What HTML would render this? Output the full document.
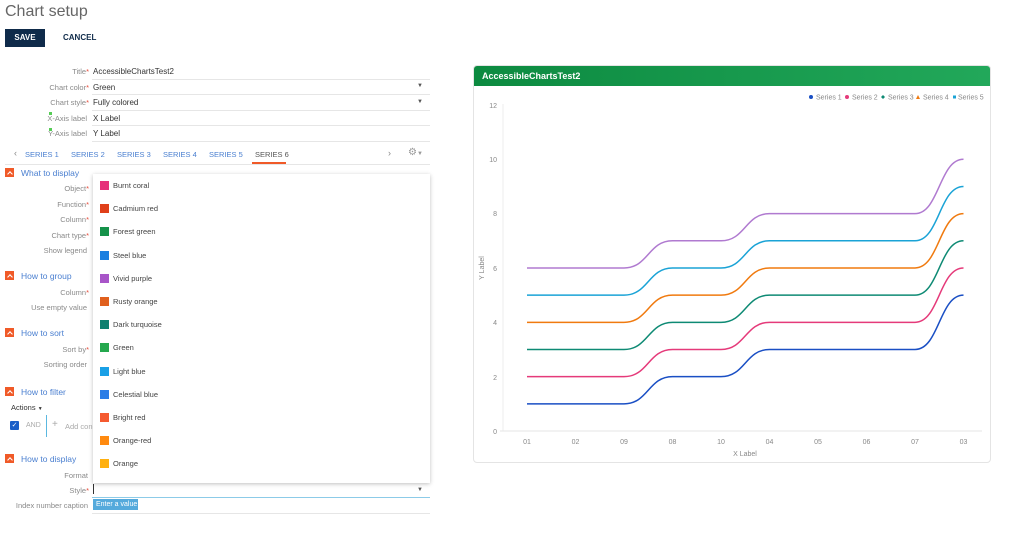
<!DOCTYPE html>
<html><head><meta charset="utf-8"><style>
*{margin:0;padding:0;box-sizing:border-box}
body{width:1024px;height:544px;background:#fff;font-family:"Liberation Sans",sans-serif;position:relative;overflow:hidden;color:#333}
.a{position:absolute;white-space:nowrap}
.lbl{position:absolute;right:935px;font-size:7.5px;color:#8a8a8a;text-align:right;white-space:nowrap}
.req{color:#e74c3c}
.val{position:absolute;left:93px;font-size:8px;color:#333;white-space:nowrap}
.line{position:absolute;left:92px;width:338px;height:1px;background:#e6e6e6}
.tab{position:absolute;top:150px;font-size:7.5px;color:#4a7fd0;white-space:nowrap}
.sec{position:absolute;left:21px;font-size:8.5px;color:#4a7fd0;white-space:nowrap}
.ico{position:absolute;left:5px;width:9px;height:9px;background:#f05a28}
.ico:after{content:"";position:absolute;left:2.5px;top:3.5px;width:3px;height:3px;border-left:1px solid #fff;border-top:1px solid #fff;transform:rotate(45deg)}
.it{position:absolute;left:100px;width:200px;height:10px;font-size:7.5px;color:#444;white-space:nowrap}
.it i{position:absolute;left:0;top:0;width:9px;height:9px}
.it span{position:absolute;left:13px;top:0px;white-space:nowrap}
</style></head><body>
<div class="a" style="left:5px;top:3px;font-size:16px;color:#666">Chart setup</div>
<div class="a" style="left:5px;top:29px;width:40px;height:18px;background:#0f2b4a;color:#fff;font-size:8px;font-weight:bold;line-height:18px;text-align:center">SAVE</div>
<div class="a" style="left:63px;top:33px;font-size:8px;font-weight:bold;color:#0f2b4a">CANCEL</div>

<div class="lbl" style="top:67px">Title<span class="req">*</span></div><div class="val" style="top:67px">AccessibleChartsTest2</div><div class="line" style="top:79px"></div>
<div class="lbl" style="top:83px">Chart color<span class="req">*</span></div><div class="val" style="top:83px">Green</div><div class="a" style="left:417px;top:83px;font-size:6px;color:#555">▼</div><div class="line" style="top:94px"></div>
<div class="lbl" style="top:98px">Chart style<span class="req">*</span></div><div class="val" style="top:98px">Fully colored</div><div class="a" style="left:417px;top:99px;font-size:6px;color:#555">▼</div><div class="line" style="top:110px"></div>
<div class="lbl" style="top:114px;right:937px">X-Axis label</div><div class="val" style="top:114px">X Label</div><div class="line" style="top:125px"></div>
<div class="lbl" style="top:129px;right:937px">Y-Axis label</div><div class="val" style="top:129px">Y Label</div><div class="line" style="top:141px"></div>
<div class="a" style="left:49px;top:112px;width:3px;height:3px;background:#5c5"></div>
<div class="a" style="left:49px;top:128px;width:3px;height:3px;background:#5c5"></div>

<div class="a" style="left:14px;top:148px;font-size:9px;color:#888">‹</div>
<div class="tab" style="left:25px">SERIES 1</div>
<div class="tab" style="left:71px">SERIES 2</div>
<div class="tab" style="left:117px">SERIES 3</div>
<div class="tab" style="left:163px">SERIES 4</div>
<div class="tab" style="left:209px">SERIES 5</div>
<div class="tab" style="left:255px;color:#555">SERIES 6</div>
<div class="a" style="left:252px;top:162px;width:34px;height:2px;background:#f05a28"></div>
<div class="a" style="left:388px;top:148px;font-size:9px;color:#888">›</div>
<div class="a" style="left:408px;top:147px;font-size:10px;color:#999">⚙<span style="font-size:6px">▼</span></div>
<div class="a" style="left:5px;top:164px;width:425px;height:1px;background:#e6e6e6"></div>

<div class="ico" style="top:168px"></div><div class="sec" style="top:168px">What to display</div>
<div class="lbl" style="top:184px">Object<span class="req">*</span></div>
<div class="lbl" style="top:200px">Function<span class="req">*</span></div>
<div class="lbl" style="top:215px">Column<span class="req">*</span></div>
<div class="lbl" style="top:231px">Chart type<span class="req">*</span></div>
<div class="lbl" style="top:246px;right:937px">Show legend</div>
<div class="ico" style="top:271px"></div><div class="sec" style="top:271px">How to group</div>
<div class="lbl" style="top:288px">Column<span class="req">*</span></div>
<div class="lbl" style="top:303px;right:937px">Use empty value</div>
<div class="ico" style="top:328px"></div><div class="sec" style="top:328px">How to sort</div>
<div class="lbl" style="top:345px">Sort by<span class="req">*</span></div>
<div class="lbl" style="top:360px;right:937px">Sorting order</div>
<div class="ico" style="top:387px"></div><div class="sec" style="top:387px">How to filter</div>
<div class="a" style="left:11px;top:403px;font-size:7.5px;color:#333">Actions <span style="font-size:5px">▼</span></div>
<div class="a" style="left:10px;top:421px;width:9px;height:9px;background:#1a5fc8;border-radius:1px;color:#fff;font-size:7px;line-height:9px;text-align:center">✓</div>
<div class="a" style="left:26px;top:422px;font-size:7px;color:#aaa">AND</div>
<div class="a" style="left:46px;top:415px;width:1px;height:22px;background:#5bb8e0"></div>
<div class="a" style="left:52px;top:419px;font-size:10px;color:#aaa">+</div>
<div class="a" style="left:65px;top:422px;font-size:7.5px;color:#aaa">Add con</div>
<div class="ico" style="top:454px"></div><div class="sec" style="top:454px">How to display</div>
<div class="lbl" style="top:471px;right:936px">Format</div>
<div class="lbl" style="top:486px">Style<span class="req">*</span></div>
<div class="a" style="left:93px;top:484px;width:1px;height:10px;background:#333"></div>
<div class="a" style="left:417px;top:487px;font-size:6px;color:#555">▼</div>
<div class="a" style="left:92px;top:497px;width:338px;height:1px;background:#8ccbe8"></div>
<div class="lbl" style="top:501px;right:936px">Index number caption</div>
<div class="a" style="left:93px;top:499px;width:45px;height:11px;background:#55aadc;color:#fff;font-size:7px;line-height:11px;padding-left:3px">Enter a value</div>
<div class="line" style="top:513px"></div>

<div class="a" style="left:93px;top:174px;width:337px;height:309px;background:#fff;box-shadow:0 1px 4px rgba(0,0,0,.25)"></div>
<div class="it" style="top:181px"><i style="background:#e6307a"></i><span>Burnt coral</span></div>
<div class="it" style="top:204px"><i style="background:#e0401a"></i><span>Cadmium red</span></div>
<div class="it" style="top:227px"><i style="background:#15924a"></i><span>Forest green</span></div>
<div class="it" style="top:251px"><i style="background:#1a7fe0"></i><span>Steel blue</span></div>
<div class="it" style="top:274px"><i style="background:#a855c8"></i><span>Vivid purple</span></div>
<div class="it" style="top:297px"><i style="background:#e0601e"></i><span>Rusty orange</span></div>
<div class="it" style="top:320px"><i style="background:#0e8070"></i><span>Dark turquoise</span></div>
<div class="it" style="top:343px"><i style="background:#25a84e"></i><span>Green</span></div>
<div class="it" style="top:367px"><i style="background:#1aa0e6"></i><span>Light blue</span></div>
<div class="it" style="top:390px"><i style="background:#2a7de6"></i><span>Celestial blue</span></div>
<div class="it" style="top:413px"><i style="background:#f55a30"></i><span>Bright red</span></div>
<div class="it" style="top:436px"><i style="background:#ff8a10"></i><span>Orange-red</span></div>
<div class="it" style="top:459px"><i style="background:#ffb010"></i><span>Orange</span></div>

<div class="a" style="left:473px;top:65px;width:518px;height:398px;border:1px solid #e4e4e4;border-radius:4px;overflow:hidden">
<div style="height:20px;background:linear-gradient(90deg,#0c8a40,#22a85a);color:#fff;font-size:9px;font-weight:bold;line-height:20px;padding-left:8px">AccessibleChartsTest2</div>
</div>
<svg class="a" style="left:0;top:0" width="1024" height="544" font-family="Liberation Sans" font-size="7" fill="#888">
<g font-size="7">
<circle cx="811" cy="97" r="2" fill="#1a4fc4"/><text x="816" y="99.5">Series 1</text>
<circle cx="847" cy="97" r="2" fill="#e53a7a"/><text x="852" y="99.5">Series 2</text>
<path d="M883 95 l2 2 -2 2 -2 -2z" fill="#0e8a74"/><text x="888" y="99.5">Series 3</text>
<path d="M918 95 l2 4 h-4z" fill="#f07a0f"/><text x="923" y="99.5">Series 4</text>
<rect x="953" y="95.5" width="3" height="3" fill="#1aa3d6"/><text x="958" y="99.5">Series 5</text>
</g>
<line x1="503" y1="104" x2="503" y2="431" stroke="#eee"/>
<line x1="500" y1="431" x2="982" y2="431" stroke="#e6e6e6"/>
<g text-anchor="end"><text x="497" y="108">12</text><text x="497" y="162">10</text><text x="497" y="216">8</text><text x="497" y="271">6</text><text x="497" y="325">4</text><text x="497" y="380">2</text><text x="497" y="434">0</text></g>
<g text-anchor="middle"><text x="527" y="444">01</text><text x="575.5" y="444">02</text><text x="624" y="444">09</text><text x="672.5" y="444">08</text><text x="721" y="444">10</text><text x="769.5" y="444">04</text><text x="818" y="444">05</text><text x="866.5" y="444">06</text><text x="915" y="444">07</text><text x="963.5" y="444">03</text>
<text x="745" y="456">X Label</text>
<text transform="translate(484,268) rotate(-90)">Y Label</text></g>
<g id="lines" fill="none" stroke-width="1.5"></g>
</svg>
<script>
var xs=[527,575.5,624,672.5,721,769.5,818,866.5,915,963.5],b=[1,1,1,2,2,3,3,3,3,5];
var cols=["#1a4fc4","#e53a7a","#0e8a74","#f07a0f","#1aa3d6","#b07ad0"],g=document.getElementById("lines"),s="";
cols.forEach(function(c,k){var y=function(v){return 431-27.17*(v+k)};var d="M"+xs[0]+" "+y(b[0]);
for(var i=1;i<xs.length;i++){var m=(xs[i-1]+xs[i])/2;d+=" C"+m+" "+y(b[i-1])+" "+m+" "+y(b[i])+" "+xs[i]+" "+y(b[i]);}
s+='<path d="'+d+'" stroke="'+c+'"/>';});
g.innerHTML=s;
</script>
</body></html>
